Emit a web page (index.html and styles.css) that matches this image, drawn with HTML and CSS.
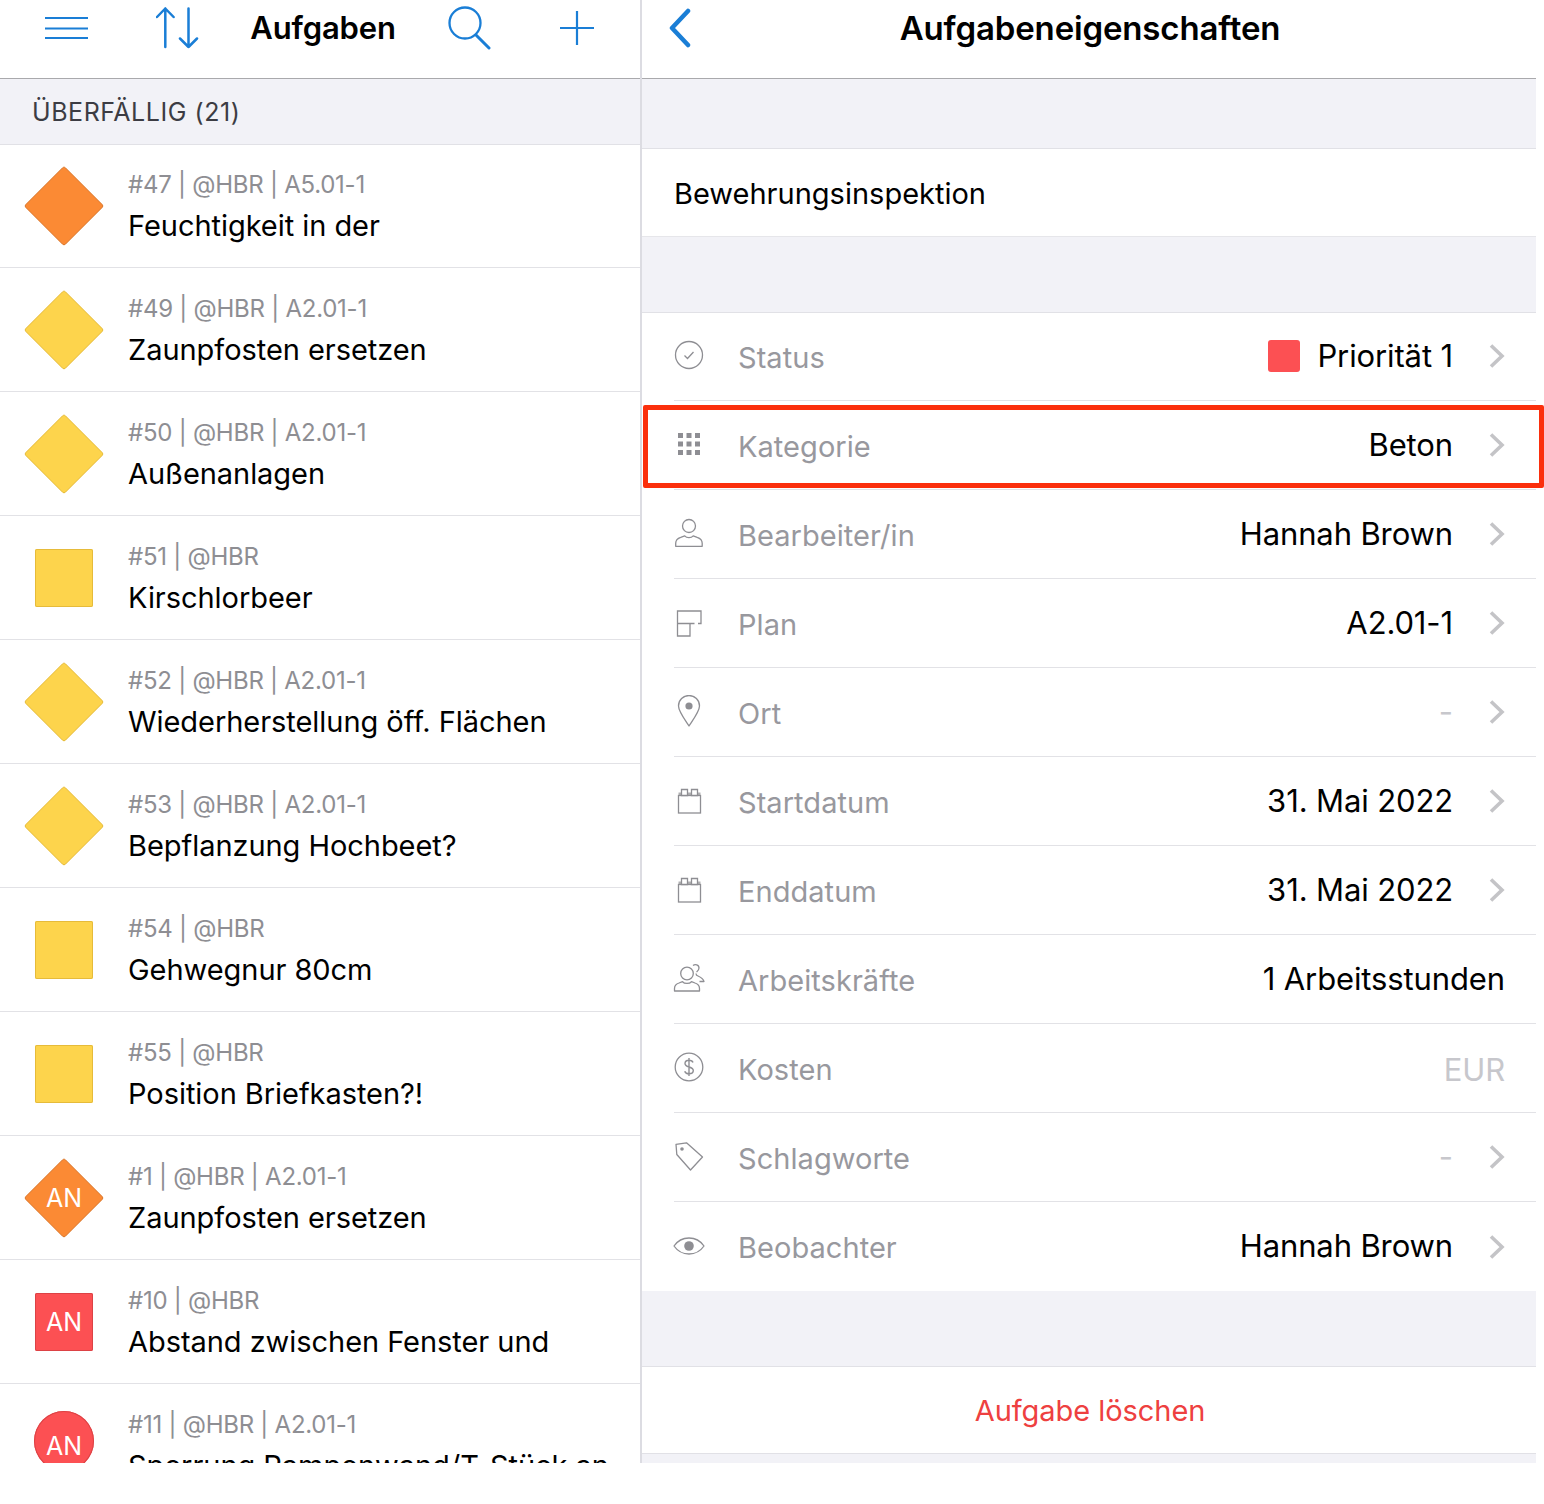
FILE: index.html
```html
<!DOCTYPE html>
<html lang="de">
<head>
<meta charset="utf-8">
<title>Aufgaben</title>
<link rel="stylesheet" href="styles.css">
</head>
<body>
<svg class="defs" width="0" height="0" aria-hidden="true">
  <defs>
    <symbol id="diamond" viewBox="0 0 80 80"><path d="M40 1.2a2 2 0 0 1 1.4.6l36.8 36.8a2 2 0 0 1 0 2.8L41.400 78.200a2 2 0 0 1-2.800 0L1.800 41.400a2 2 0 0 1 0-2.800L38.600 1.800a2 2 0 0 1 1.400-.6z"/></symbol>
    <symbol id="chev" viewBox="0 0 16 26"><path d="M2 2.500l11 10.500L2 23.500" fill="none" stroke="currentColor" stroke-width="3.600"/></symbol>
    <symbol id="cal" viewBox="0 0 32 32"><path d="M5.500 8.500h22v3.500h-22z" fill="currentColor" opacity=".7"/><rect x="5.500" y="11.500" width="22" height="17.500" fill="none" stroke="currentColor" stroke-width="1.300"/><path d="M8.500 5.500h6v6h-6zM18.500 5.500h6v6h-6z" fill="#fff" stroke="currentColor" stroke-width="1.300"/></symbol>
  </defs>
</svg>
<div class="stage">
  <div class="panes">
    <section class="list-pane">
      <header class="list-head">
        <svg class="ico-blue" width="44" height="24" viewBox="0 0 44 24"><path d="M1 2h43M1 12.500h43M1 22h43" fill="none" stroke="currentColor" stroke-width="2"/></svg>
        <svg class="ico-blue" width="44" height="44" viewBox="0 0 44 44"><path d="M9.300 41V2.500M1 11l8.300-8.500 8.300 8.500M32.500 2.500V41M24 32.500l8.500 8.500 8.500-8.500" fill="none" stroke="currentColor" stroke-width="2.500" stroke-linecap="round" stroke-linejoin="round"/></svg>
        <h1 class="head-title">Aufgaben</h1>
        <svg class="ico-blue" width="44" height="44" viewBox="0 0 44 44"><circle cx="17" cy="17" r="15.500" fill="none" stroke="currentColor" stroke-width="2.300"/><path d="M28 29l13 13" fill="none" stroke="currentColor" stroke-width="3" stroke-linecap="round"/></svg>
        <svg class="ico-blue" width="36" height="36" viewBox="0 0 36 36"><path d="M18 1v34M1 18h34" fill="none" stroke="currentColor" stroke-width="2.200"/></svg>
      </header>
      <div class="section-label">ÜBERFÄLLIG (21)</div>
      <ul class="tasks">
        <li class="task"><div class="mark"><svg class="shape orange"><use href="#diamond"/></svg></div><div class="task-text"><p class="meta">#47 | @HBR | A5.01-1</p><p class="name">Feuchtigkeit in der</p></div></li>
        <li class="task"><div class="mark"><svg class="shape yellow"><use href="#diamond"/></svg></div><div class="task-text"><p class="meta">#49 | @HBR | A2.01-1</p><p class="name">Zaunpfosten ersetzen</p></div></li>
        <li class="task"><div class="mark"><svg class="shape yellow"><use href="#diamond"/></svg></div><div class="task-text"><p class="meta">#50 | @HBR | A2.01-1</p><p class="name">Außenanlagen</p></div></li>
        <li class="task"><div class="mark"><span class="square yellow-bg"></span></div><div class="task-text"><p class="meta">#51 | @HBR</p><p class="name">Kirschlorbeer</p></div></li>
        <li class="task"><div class="mark"><svg class="shape yellow"><use href="#diamond"/></svg></div><div class="task-text"><p class="meta">#52 | @HBR | A2.01-1</p><p class="name">Wiederherstellung öff. Flächen</p></div></li>
        <li class="task"><div class="mark"><svg class="shape yellow"><use href="#diamond"/></svg></div><div class="task-text"><p class="meta">#53 | @HBR | A2.01-1</p><p class="name">Bepflanzung Hochbeet?</p></div></li>
        <li class="task"><div class="mark"><span class="square yellow-bg"></span></div><div class="task-text"><p class="meta">#54 | @HBR</p><p class="name">Gehwegnur 80cm</p></div></li>
        <li class="task"><div class="mark"><span class="square yellow-bg"></span></div><div class="task-text"><p class="meta">#55 | @HBR</p><p class="name">Position Briefkasten?!</p></div></li>
        <li class="task"><div class="mark"><svg class="shape orange"><use href="#diamond"/></svg><span class="initials">AN</span></div><div class="task-text"><p class="meta">#1 | @HBR | A2.01-1</p><p class="name">Zaunpfosten ersetzen</p></div></li>
        <li class="task"><div class="mark"><span class="square red-bg"></span><span class="initials">AN</span></div><div class="task-text"><p class="meta">#10 | @HBR</p><p class="name">Abstand zwischen Fenster und</p></div></li>
        <li class="task"><div class="mark"><span class="round red-bg"></span><span class="initials">AN</span></div><div class="task-text"><p class="meta">#11 | @HBR | A2.01-1</p><p class="name">Sperrung Rampenwand/T-Stück an</p></div></li>
      </ul>
    </section>
    <section class="detail-pane">
      <header class="detail-head">
        <svg class="ico-blue back" width="24" height="40" viewBox="0 0 24 40"><path d="M20 3L4 20l16 17" fill="none" stroke="currentColor" stroke-width="4.500" stroke-linecap="round" stroke-linejoin="round"/></svg>
        <h1 class="head-title wide">Aufgabeneigenschaften</h1>
        <span></span>
      </header>
      <div class="gap gap-top"></div>
      <div class="title-row">Bewehrungsinspektion</div>
      <div class="gap gap-mid"></div>
      <div class="props">
        <div class="prop">
          <svg class="p-ico" viewBox="0 0 32 32"><circle cx="16" cy="16" r="13.500" fill="none" stroke="currentColor" stroke-width="1.300"/><path d="M11.500 16.500l3 3 6-6.500" fill="none" stroke="currentColor" stroke-width="1.300"/></svg>
          <span class="p-label">Status</span>
          <span class="swatch"></span><span class="p-value">Priorität 1</span>
          <svg class="chev"><use href="#chev"/></svg>
        </div>
        <div class="prop">
          <svg class="p-ico" viewBox="0 0 32 32"><path fill="currentColor" d="M5 5h5v5H5zM13.500 5h5v5h-5zM22 5h5v5h-5zM5 13.500h5v5H5zM13.500 13.500h5v5h-5zM22 13.500h5v5h-5zM5 22h5v5H5zM13.500 22h5v5h-5zM22 22h5v5h-5z"/></svg>
          <span class="p-label">Kategorie</span>
          <span class="p-value">Beton</span>
          <svg class="chev"><use href="#chev"/></svg>
        </div>
        <div class="prop">
          <svg class="p-ico" viewBox="0 0 32 32"><circle cx="16" cy="9" r="6.500" fill="none" stroke="currentColor" stroke-width="1.300"/><path d="M2.700 29.300v-3c0-3 2-5 5-6l4-1.500c2 2.500 6.500 2.500 8.500 0l4 1.500c3 1 5 3 5 6v3z" fill="none" stroke="currentColor" stroke-width="1.300" stroke-linejoin="round"/></svg>
          <span class="p-label">Bearbeiter/in</span>
          <span class="p-value">Hannah Brown</span>
          <svg class="chev"><use href="#chev"/></svg>
        </div>
        <div class="prop">
          <svg class="p-ico" viewBox="0 0 32 32"><path d="M4.500 17.500h17M25 17.500h3V5H4.500v25H17V17.500" fill="none" stroke="currentColor" stroke-width="1.300"/></svg>
          <span class="p-label">Plan</span>
          <span class="p-value">A2.01-1</span>
          <svg class="chev"><use href="#chev"/></svg>
        </div>
        <div class="prop">
          <svg class="p-ico" viewBox="0 0 32 32"><path d="M16 31C10 22 5.500 16 5.500 11a10.500 10.500 0 0 1 21 0c0 5-4.500 11-10.500 20z" fill="none" stroke="currentColor" stroke-width="1.300" stroke-linejoin="round"/><circle cx="16" cy="11" r="3.600" fill="currentColor"/></svg>
          <span class="p-label">Ort</span>
          <span class="p-value muted">-</span>
          <svg class="chev"><use href="#chev"/></svg>
        </div>
        <div class="prop">
          <svg class="p-ico"><use href="#cal"/></svg>
          <span class="p-label">Startdatum</span>
          <span class="p-value">31. Mai 2022</span>
          <svg class="chev"><use href="#chev"/></svg>
        </div>
        <div class="prop">
          <svg class="p-ico"><use href="#cal"/></svg>
          <span class="p-label">Enddatum</span>
          <span class="p-value">31. Mai 2022</span>
          <svg class="chev"><use href="#chev"/></svg>
        </div>
        <div class="prop">
          <svg class="p-ico" viewBox="0 0 32 32"><circle cx="14" cy="11.500" r="6.300" fill="none" stroke="currentColor" stroke-width="1.300"/><path d="M1.500 29v-2.500c0-3 1.500-4.500 4.500-5.500l3.500-1.300c2 2.300 7 2.300 9 0l3.500 1.300c3 1 4.500 2.500 4.500 5.500V29zM20 3.500c2-1.500 6-1 6 2.500 0 2-1.300 3-2.500 4M23 11.500c0 1 .5 2 2 2.500 2.500 1 5 2.500 6 5.500h-4.500" fill="none" stroke="currentColor" stroke-width="1.300" stroke-linejoin="round"/></svg>
          <span class="p-label">Arbeitskräfte</span>
          <span class="p-value">1 Arbeitsstunden</span>
        </div>
        <div class="prop">
          <svg class="p-ico" viewBox="0 0 32 32"><circle cx="16" cy="16" r="13.800" fill="none" stroke="currentColor" stroke-width="1.300"/><path d="M20 11.500c-.5-1.500-2-2.300-4-2.300-2.500 0-4 1.200-4 3.200 0 4.500 8.300 2.700 8.300 7.200 0 2-1.700 3.200-4.300 3.200-2.200 0-3.800-1-4.300-2.600M16 7v18" fill="none" stroke="currentColor" stroke-width="1.400"/></svg>
          <span class="p-label">Kosten</span>
          <span class="p-value muted low">EUR</span>
        </div>
        <div class="prop">
          <svg class="p-ico" viewBox="0 0 32 32"><path d="M3 4.300l10.500-1.500L29.500 17 17.500 30 3.800 14.500z" fill="none" stroke="currentColor" stroke-width="1.300" stroke-linejoin="round"/><circle cx="9" cy="9" r="1.800" fill="currentColor"/></svg>
          <span class="p-label">Schlagworte</span>
          <span class="p-value muted">-</span>
          <svg class="chev"><use href="#chev"/></svg>
        </div>
        <div class="prop">
          <svg class="p-ico" viewBox="0 0 32 32"><path d="M1 16c3.500-5 9-8 15-8s11.500 3 15 8c-3.500 5-9 8-15 8S4.500 21 1 16z" fill="none" stroke="currentColor" stroke-width="1.300" stroke-linejoin="round"/><circle cx="16" cy="16" r="4.800" fill="currentColor"/></svg>
          <span class="p-label">Beobachter</span>
          <span class="p-value">Hannah Brown</span>
          <svg class="chev"><use href="#chev"/></svg>
        </div>
      </div>
      <div class="gap gap-low"></div>
      <div class="delete-row">Aufgabe löschen</div>
      <div class="gap gap-end"></div>
    </section>
  </div>
  <div class="highlight"></div>
</div>
</body>
</html>
```

FILE: styles.css
```css
* { box-sizing: border-box; }
html, body { margin: 0; padding: 0; background: #fff; }
body { font-family: Inter, "Noto Sans", "Liberation Sans", sans-serif; color: #000; }
.defs { display: block; height: 0; }
.stage { position: relative; width: 1544px; height: 1504px; }
.panes { display: flex; width: 1536px; height: 1463px; overflow: hidden; }

.list-pane { width: 642px; flex: none; border-right: 2px solid #dcdce2; }
.detail-pane { flex: 1; min-width: 0; }

.ico-blue { color: #1a7ed6; display: block; }
.head-title { margin: 0; font-size: 31px; line-height: 40px; font-weight: 600; letter-spacing: -0.15px; white-space: nowrap; }
.head-title.wide { font-size: 33px; padding-left: 2px; }

.list-head {
  height: 79px;
  padding-bottom: 23px;
  border-bottom: 1px solid #a9a9ac;
  display: grid;
  grid-template-columns: 132px 92px 198px 96px 118px;
  justify-items: center;
  align-items: center;
}
.section-label {
  height: 66px;
  padding: 0 0 0 32px;
  display: flex;
  align-items: center;
  background: #f2f2f7;
  border-bottom: 1px solid #e1e1e6;
  font-size: 25px;
  letter-spacing: 0.55px;
  color: #3c3c43;
}
.tasks { list-style: none; margin: -1px 0 0; padding: 0; }
.task {
  height: 124px;
  display: flex;
  border-bottom: 1px solid #e2e2e6;
}
.mark {
  width: 128px;
  flex: none;
  height: 123px;
  display: grid;
  place-items: center;
}
.mark > * { grid-area: 1 / 1; }
.shape { width: 80px; height: 80px; display: block; }
.orange { fill: #fb8a34; stroke: #d9772c; }
.yellow { fill: #fdd44c; stroke: #e6bb3a; }
.square { width: 58px; height: 58px; border-radius: 2px; }
.round { width: 60px; height: 60px; border-radius: 50%; margin-bottom: 10px; }
.yellow-bg { background: #fdd44c; box-shadow: inset 0 0 0 1px #e6bb3a; }
.red-bg { background: #fc5053; box-shadow: inset 0 0 0 1px #dc4245; }
.initials { color: #fff; font-size: 25px; line-height: 30px; }
.task-text { padding-top: 25px; min-width: 0; }
.meta { margin: 0; height: 32px; font-size: 24px; line-height: 32px; letter-spacing: -0.25px; color: #8e8e93; white-space: nowrap; }
.name { margin: 6px 0 0; font-size: 29px; line-height: 38px; letter-spacing: -0.05px; white-space: nowrap; }

.detail-head {
  height: 79px;
  padding-bottom: 23px;
  border-bottom: 1px solid #a9a9ac;
  display: grid;
  grid-template-columns: 1fr auto 1fr;
  align-items: center;
}
.back { margin-left: 26px; }
.gap { background: #f2f2f7; border-bottom: 1px solid #e1e1e6; }
.gap-top { height: 70px; }
.gap-mid { height: 76px; }
.gap-low { height: 76px; }
.gap-end { height: 10px; border-bottom: 0; border-top: 1px solid #e1e1e6; margin-top: -1px; }
.title-row { height: 88px; padding: 1px 0 0 32px; display: flex; align-items: center; border-bottom: 1px solid #e6e6ea; font-size: 29px; }
.props { margin-top: -1px; }
.prop {
  height: 89px;
  margin-left: 32px;
  padding-right: 31px;
  display: flex;
  align-items: center;
  border-bottom: 1px solid #e2e2e6;
}
.prop:last-child { border-bottom: 0; }
.p-ico { width: 32px; height: 32px; color: #8e8e93; flex: none; display: block; margin: 0 0 2px -1px; }
.p-label { margin-left: 33px; flex: 1; font-size: 29px; letter-spacing: 0.05px; color: #98989e; padding-top: 2px; }
.p-value { font-size: 31px; letter-spacing: -0.12px; margin-bottom: 2px; white-space: nowrap; }
.p-value.muted { color: #c7c7cc; }
.p-value.low { margin-bottom: 0; padding-top: 2px; }
.swatch { width: 32px; height: 32px; border-radius: 3px; background: #fc5053; margin-right: 17px; }
.chev { width: 16px; height: 26px; color: #c4c4c7; margin-left: 36px; flex: none; }
.delete-row { height: 87px; padding-left: 2px; display: flex; align-items: center; justify-content: center; font-size: 29px; letter-spacing: -0.05px; color: #ee4040; background: #fff; }

.highlight {
  position: absolute;
  left: 643px;
  top: 405px;
  width: 901px;
  height: 83px;
  border: 5px solid #fb2f0c;
  border-radius: 2px;
}
```
